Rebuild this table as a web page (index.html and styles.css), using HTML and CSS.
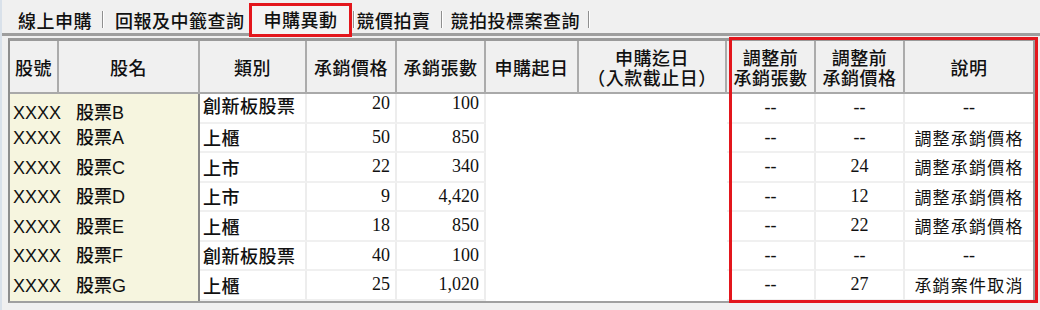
FILE: index.html
```html
<!DOCTYPE html>
<html lang="zh-Hant">
<head>
<meta charset="utf-8">
<title>申購異動</title>
<link rel="stylesheet" href="styles.css">
</head>
<body>
<div class="screen">
  <div class="tabs">
    <span class="tab t1">線上申購</span>
    <span class="sep s1"></span>
    <span class="tab t2">回報及中籤查詢</span>
    <span class="tab active">申購異動</span>
    <span class="sep s3"></span>
    <span class="tab t4">競價拍賣</span>
    <span class="sep s4"></span>
    <span class="tab t5">競拍投標案查詢</span>
    <span class="sep s5"></span>
  </div>
  <div class="panel">
    <div class="grid">
      <div class="h">股號</div>
      <div class="h">股名</div>
      <div class="h">類別</div>
      <div class="h">承銷價格</div>
      <div class="h">承銷張數</div>
      <div class="h">申購起日</div>
      <div class="h"><span class="hl">申購迄日</span><span class="hl">（入款截止日）</span></div>
      <div class="h"><span class="hl">調整前</span><span class="hl">承銷張數</span></div>
      <div class="h"><span class="hl">調整前</span><span class="hl">承銷價格</span></div>
      <div class="h last">說明</div>

      <div class="name first"><span class="nm">XXXX<span class="stk">股票B</span></span></div>
      <div class="c cat first">創新板股票</div>
      <div class="c num first">20</div>
      <div class="c num first">100</div>
      <div class="c blank"></div>
      <div class="c blank"></div>
      <div class="c ctr">--</div>
      <div class="c ctr">--</div>
      <div class="c ctr last">--</div>

      <div class="name"><span class="nm">XXXX<span class="stk">股票A</span></span></div>
      <div class="c cat">上櫃</div>
      <div class="c num">50</div>
      <div class="c num">850</div>
      <div class="c blank"></div>
      <div class="c blank"></div>
      <div class="c ctr">--</div>
      <div class="c ctr">--</div>
      <div class="c note last">調整承銷價格</div>

      <div class="name"><span class="nm">XXXX<span class="stk">股票C</span></span></div>
      <div class="c cat">上市</div>
      <div class="c num">22</div>
      <div class="c num">340</div>
      <div class="c blank"></div>
      <div class="c blank"></div>
      <div class="c ctr">--</div>
      <div class="c ctr">24</div>
      <div class="c note last">調整承銷價格</div>

      <div class="name"><span class="nm">XXXX<span class="stk">股票D</span></span></div>
      <div class="c cat">上市</div>
      <div class="c num">9</div>
      <div class="c num">4,420</div>
      <div class="c blank"></div>
      <div class="c blank"></div>
      <div class="c ctr">--</div>
      <div class="c ctr">12</div>
      <div class="c note last">調整承銷價格</div>

      <div class="name"><span class="nm">XXXX<span class="stk">股票E</span></span></div>
      <div class="c cat">上櫃</div>
      <div class="c num">18</div>
      <div class="c num">850</div>
      <div class="c blank"></div>
      <div class="c blank"></div>
      <div class="c ctr">--</div>
      <div class="c ctr">22</div>
      <div class="c note last">調整承銷價格</div>

      <div class="name"><span class="nm">XXXX<span class="stk">股票F</span></span></div>
      <div class="c cat">創新板股票</div>
      <div class="c num">40</div>
      <div class="c num">100</div>
      <div class="c blank"></div>
      <div class="c blank"></div>
      <div class="c ctr">--</div>
      <div class="c ctr">--</div>
      <div class="c ctr last">--</div>

      <div class="name"><span class="nm">XXXX<span class="stk">股票G</span></span></div>
      <div class="c cat">上櫃</div>
      <div class="c num">25</div>
      <div class="c num">1,020</div>
      <div class="c blank"></div>
      <div class="c blank"></div>
      <div class="c ctr">--</div>
      <div class="c ctr">27</div>
      <div class="c note last">承銷案件取消</div>
    </div>
    <div class="highlight"></div>
  </div>
</div>
</body>
</html>
```
FILE: styles.css
```css
html, body {
  margin: 0;
  padding: 0;
}
body {
  width: 1040px;
  height: 310px;
  overflow: hidden;
  background: #f0f0f0;
  font-family: "Noto Sans CJK TC", "Noto Sans CJK SC", sans-serif;
  color: #111;
}
.screen {
  width: 1040px;
  height: 310px;
  box-sizing: border-box;
  border-left: 2px solid #d9e1ea;
}

/* ---------- tabs ---------- */
.tabs {
  display: flex;
  align-items: center;
  box-sizing: border-box;
  height: 36px;
  padding: 6px 0 0 16px;
  border-bottom: 3px solid #9e9e9e;
  font-size: 18px;
  font-weight: 500;
  line-height: 20px;
  letter-spacing: 0.5px;
  white-space: nowrap;
}
.tab {
  display: block;
}
.sep {
  display: block;
  width: 0;
  height: 17px;
  border-left: 1px solid #8f8f8f;
  border-right: 1px solid #ffffff;
}
.s1 { margin-left: 10px; }
.t2 { margin-left: 11px; }
.active {
  box-sizing: border-box;
  height: 34px;
  margin-left: 4px;
  padding: 3px 11px 0 12px;
  border: 3px solid #e3161c;
  background: #f4f4f4;
  line-height: 20px;
}
.s3 { margin-left: 1px; }
.t4 { margin-left: 2px; }
.s4 { margin-left: 10px; }
.t5 { margin-left: 8px; }
.s5 { margin-left: 8px; }

/* ---------- grid panel ---------- */
.panel {
  position: relative;
  margin: 2px 0 0 6px;
  width: 1027px;
}
.grid {
  display: grid;
  grid-template-columns: 49px 141px 107px 90px 89px 93px 148px 89px 89px 128px;
  grid-template-rows: 53px repeat(7, 29.5px);
  box-sizing: border-box;
  width: 1027px;
  border-top: 3px solid #9a9a9a;
  border-left: 2px solid #8e8e8e;
  border-right: 2px solid #9a9a9a;
  border-bottom: 2px solid #a0a0a0;
  background: #ffffff;
}
.h {
  display: flex;
  flex-direction: column;
  align-items: center;
  justify-content: center;
  box-sizing: border-box;
  background: #f0f0f0;
  border-right: 2px solid #ababab;
  border-bottom: 2px solid #a9a9a9;
  font-size: 18px;
  font-weight: 500;
  line-height: 20px;
  letter-spacing: 0.5px;
  text-align: center;
  white-space: nowrap;
}
.hl {
  display: block;
  height: 20px;
}
.h.last { border-right: none; }

.name {
  grid-column: span 2;
  display: flex;
  align-items: center;
  box-sizing: border-box;
  padding-left: 3px;
  background: #f6f5df;
  border-right: 2px solid #8a8a8a;
  font-family: "Liberation Sans", "Noto Sans CJK TC", sans-serif;
  font-size: 18px;
  font-weight: 500;
  line-height: 22px;
  white-space: nowrap;
}
.nm {
  display: block;
}
.stk {
  margin-left: 15px;
}
.name.first { padding-top: 8px; }
.c {
  display: flex;
  align-items: center;
  box-sizing: border-box;
  border-right: 2px solid #ededed;
  border-bottom: 2px solid #f0f0f0;
  white-space: nowrap;
}
.c.last { border-right: none; }
.cat {
  padding-left: 3px;
  font-size: 18px;
  font-weight: 500;
  letter-spacing: 0.5px;
}
.cat.first { padding-bottom: 6px; }
.num {
  justify-content: flex-end;
  padding-right: 5px;
  font-family: "Liberation Serif", serif;
  font-size: 18px;
}
.num.first { padding-bottom: 8px; }
.blank {
  border-bottom-color: #ffffff;
  border-right-color: #ffffff;
}
.ctr {
  justify-content: center;
  font-family: "Liberation Serif", serif;
  font-size: 18px;
}
.note {
  justify-content: center;
  font-size: 17px;
  letter-spacing: 1.2px;
}

/* annotation box over the adjusted columns */
.highlight {
  position: absolute;
  left: 721px;
  top: -1px;
  width: 309px;
  height: 266px;
  box-sizing: border-box;
  border: 3px solid #e3161c;
  pointer-events: none;
}
```
